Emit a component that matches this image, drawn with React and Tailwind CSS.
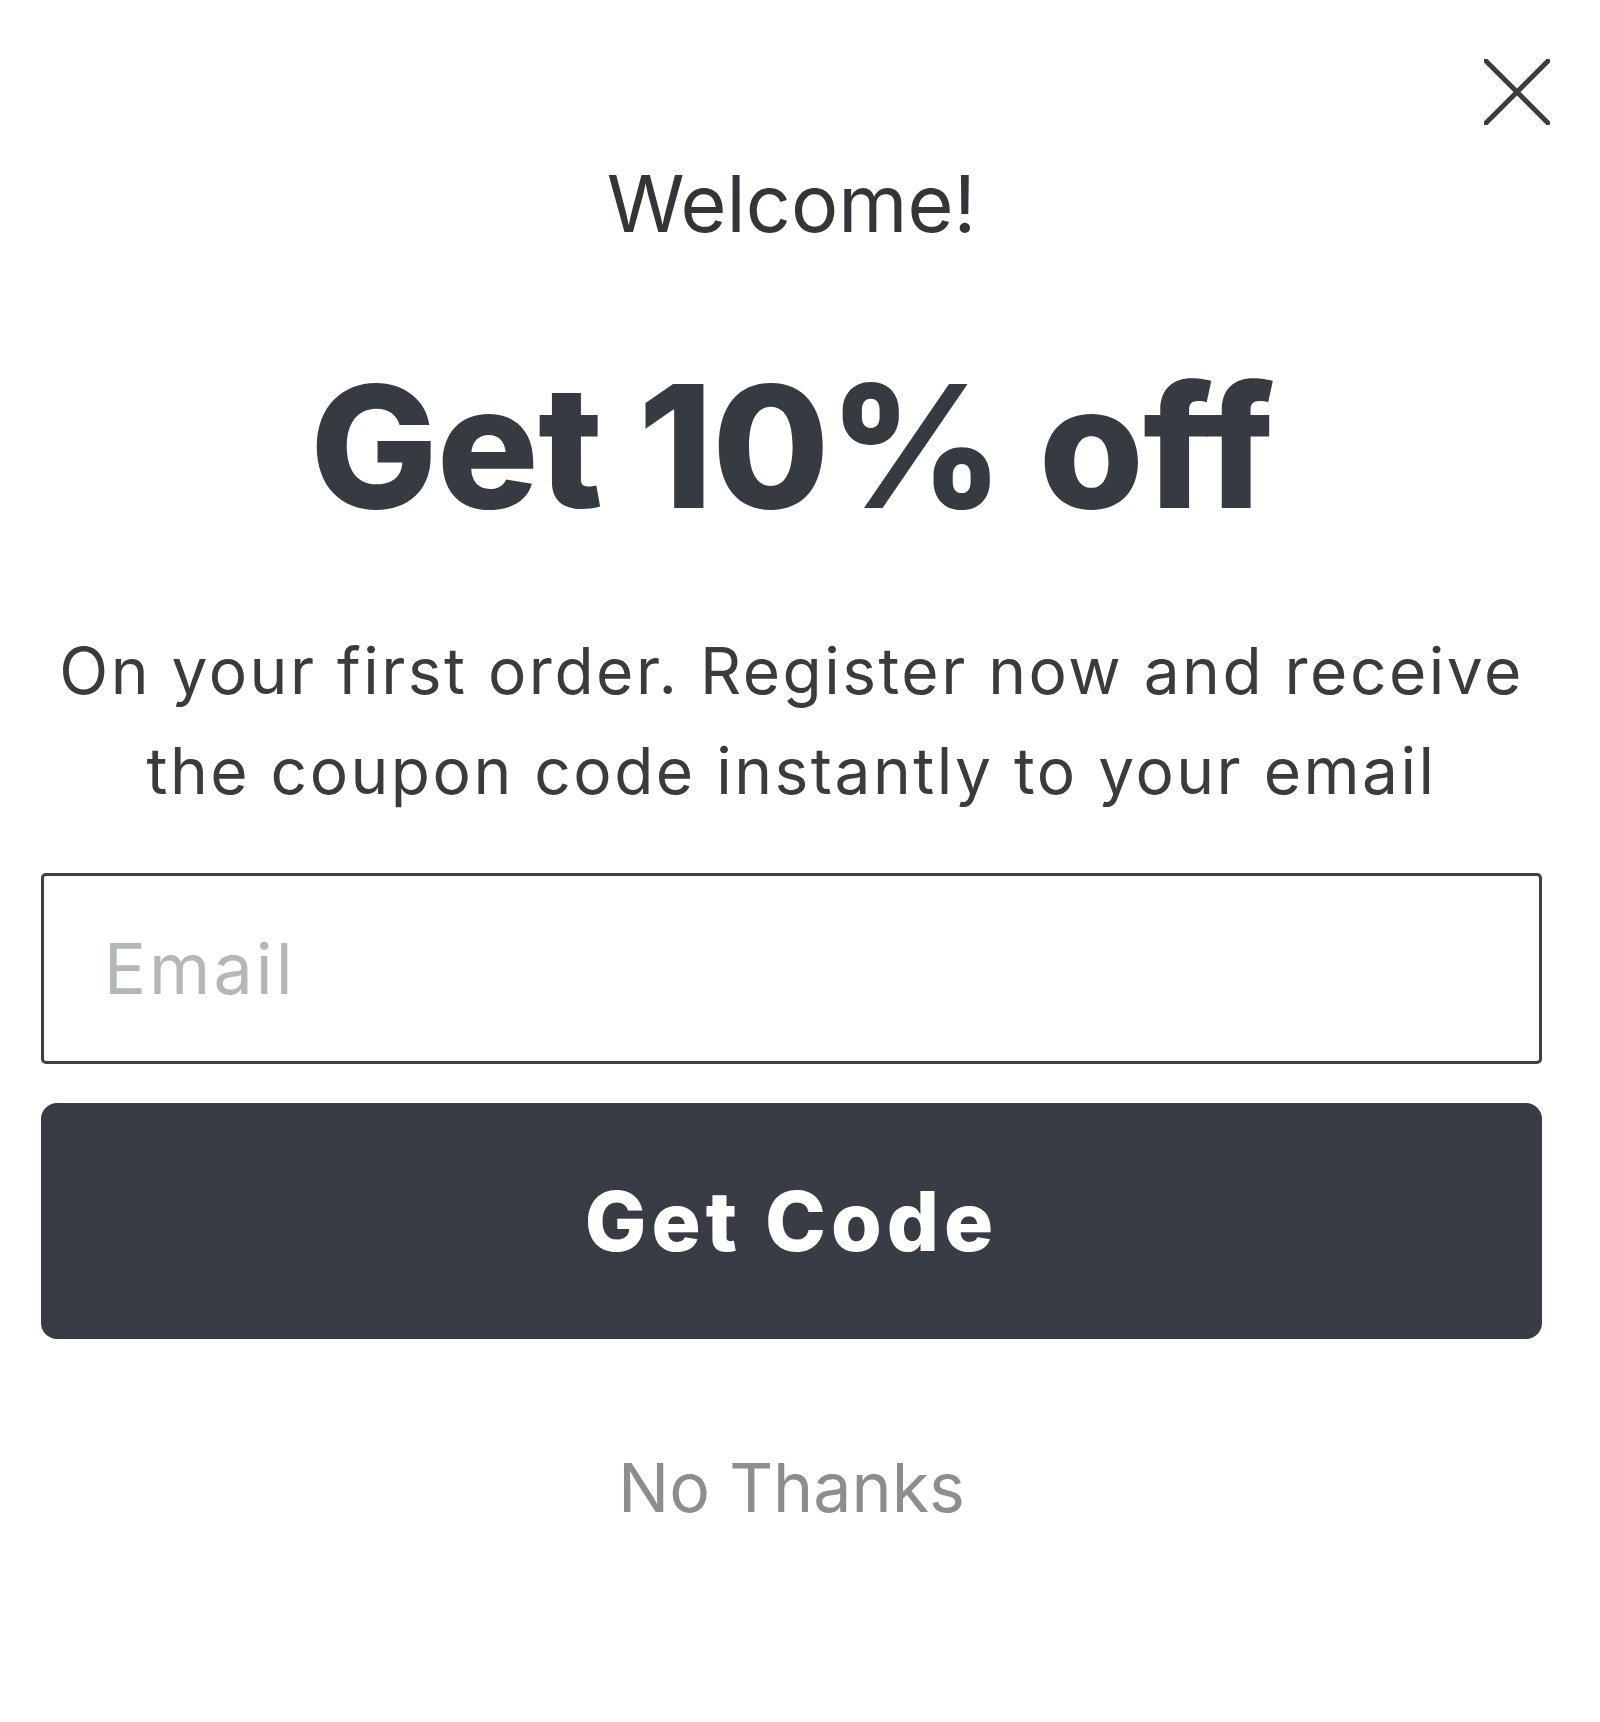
const CloseIcon = () => (
  <svg width="66" height="66" viewBox="0 0 66 66" fill="none">
    <path d="M2 2L64 64M64 2L2 64" stroke="#3a3d42" strokeWidth="5" strokeLinecap="round" />
  </svg>
);

export default function App() {
  return (
    <div
      className="relative w-[1600px] h-[1722px] bg-white"
      style={{ fontFamily: "Inter, 'Noto Sans', sans-serif" }}
    >
      <button className="absolute right-[50px] top-[59px]">
        <CloseIcon />
      </button>
      <div className="flex flex-col items-center pl-[41px] pr-[58px] pt-[153px]">
        <div className="text-[79px] leading-[100px] text-[#333539]">Welcome!</div>
        <h1 className="mt-[93px] text-[170px] leading-[200px] font-extrabold text-[#363a41] tracking-[-1px]">
          Get 10% off
        </h1>
        <p className="mt-[75px] text-center text-[64px] leading-[100px] tracking-[2.5px] text-[#3a3b3d]">
          On your first order. Register now and receive the coupon code instantly to your email
        </p>
        <input
          type="email"
          placeholder="Email"
          className="mt-[52px] w-full h-[191px] border-[3px] border-[#3d3f42] rounded-[5px] px-[60px] text-[70px] tracking-[3px] placeholder:text-[#b4b7b9] outline-none"
        />
        <button className="mt-[39px] w-full h-[236px] rounded-[16px] bg-[#383d45] text-white text-[82px] font-extrabold tracking-[5px]">
          Get Code
        </button>
        <button className="mt-[103px] text-[68px] leading-[90px] text-[#8c8d8f]">No Thanks</button>
      </div>
    </div>
  );
}
